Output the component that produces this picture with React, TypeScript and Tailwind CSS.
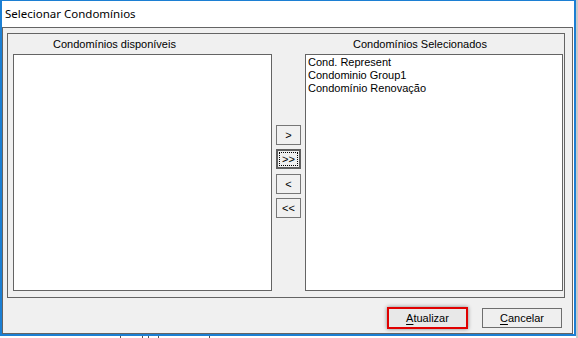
import { ReactNode } from "react";

const disponiveis: string[] = [];
const selecionados = ["Cond. Represent", "Condominio Group1", "Condomínio Renovação"];

function MoveButton({ label, focused }: { label: string; focused?: boolean }) {
  if (focused) {
    return (
      <div className="w-[25px] h-[20px] border-2 border-[#5f5f5f] bg-[#f0f0f0] p-px">
        <div className="w-full h-full border border-dotted border-black flex items-center justify-center text-[11px] leading-none text-black">
          {label}
        </div>
      </div>
    );
  }
  return (
    <div className="w-[25px] h-[20px] border border-[#767676] bg-[#f0f0f0] flex items-center justify-center text-[11px] leading-none text-black">
      {label}
    </div>
  );
}

function ListBox({ items }: { items: string[] }) {
  return (
    <div className="h-[237px] bg-white border border-[#646464] pt-px pl-[2px]">
      {items.map((it) => (
        <div key={it} className="text-[11px] leading-[13px] text-black whitespace-nowrap">{it}</div>
      ))}
    </div>
  );
}

function Mnemonic({ first, rest }: { first: string; rest: string }): ReactNode {
  return (
    <span>
      <span className="underline underline-offset-2">{first}</span>
      {rest}
    </span>
  );
}

export default function App() {
  return (
    <div
      className="w-[578px] h-[338px] bg-white overflow-hidden flex"
      style={{ fontFamily: '"Liberation Sans", Arial, sans-serif' }}
    >
      <div className="flex flex-col">
        <div className="w-[576px] h-[336px] border-[#1c7fd3] border-t border-l-2 border-r-2 border-b-2 flex flex-col">
          <div
            className="h-[26px] bg-white flex items-center pl-[3px] text-[11.5px] text-black"
            style={{ fontFamily: '"Noto Sans", "Open Sans", sans-serif' }}
          >
            Selecionar Condomínios
          </div>
          <div className="flex-1 mr-px border border-[#646464] bg-[#f0f0f0] pl-[4px] pt-[5px] pr-[6px]">
            <div className="w-[558px] h-[265px] border border-[#646464] flex pl-[5px] pr-px">
              <div className="w-[259px] flex flex-col">
                <div className="h-[20px] pt-[4px] pl-[40px] text-[11px] leading-[13px] text-black whitespace-nowrap">
                  Condomínios disponíveis
                </div>
                <ListBox items={disponiveis} />
              </div>
              <div className="w-[33px] flex flex-col items-center pt-[91px] gap-[4px]">
                <MoveButton label=">" />
                <MoveButton label=">>" focused />
                <div className="mt-px">
                  <MoveButton label="<" />
                </div>
                <MoveButton label="<<" />
              </div>
              <div className="w-[258px] flex flex-col">
                <div className="h-[20px] pt-[4px] pl-[48px] text-[11px] leading-[13px] text-black whitespace-nowrap">
                  Condomínios Selecionados
                </div>
                <ListBox items={selecionados} />
              </div>
            </div>
            <div className="flex justify-end items-center gap-[14px] pt-[9px] pr-[4px]">
              <div className="w-[81px] h-[22px] border-2 border-[#e00000] shadow-[0_0_4px_rgba(0,0,0,0.45)] bg-[#e8e8e8] flex items-center justify-center text-[11px] text-black">
                <Mnemonic first="A" rest="tualizar" />
              </div>
              <div className="w-[80px] h-[20px] border border-[#6e6e6e] bg-[#efefef] flex items-center justify-center text-[11px] text-black">
                <Mnemonic first="C" rest="ancelar" />
              </div>
            </div>
          </div>
        </div>
        <div className="h-[2px] w-[576px] flex">
          <div className="w-[120px] bg-white" />
          <div className="w-px bg-[#555]" />
          <div className="w-[21px] bg-white" />
          <div className="w-px bg-[#555]" />
          <div className="w-[5px] bg-white" />
          <div className="w-px bg-[#555]" />
          <div className="w-[9px] bg-white" />
          <div className="w-px bg-[#555]" />
          <div className="w-[50px] bg-white" />
          <div className="w-px bg-[#555]" />
          <div className="flex-1 bg-white" />
        </div>
      </div>
      <div className="w-[2px] h-[338px] bg-[#c9c9c9]" />
    </div>
  );
}
